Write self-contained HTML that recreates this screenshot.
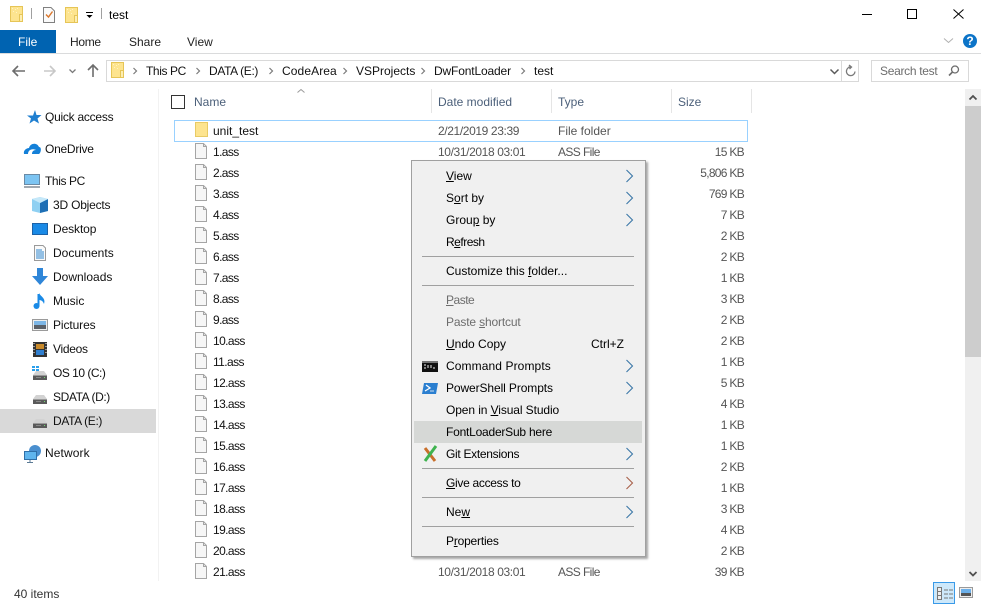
<!DOCTYPE html>
<html><head><meta charset="utf-8">
<style>
html,body{margin:0;padding:0;background:#fff}
#w{position:relative;width:981px;height:605px;overflow:hidden;background:#fff;font:12px/16px "Liberation Sans",sans-serif;color:#000}
#w span,#w div{position:absolute;white-space:nowrap}
svg{position:absolute;left:0;top:0}
.n{color:#111}
.h{color:#4c607a}
.g{color:#555}
.d{color:#555;left:438px;letter-spacing:-.38px}
.t{color:#555;left:558px}
.sz{color:#555;right:237px;letter-spacing:-.7px}
.f{left:213px;color:#111;letter-spacing:-.6px}
#m{left:411px;top:160px;width:233px;height:395px;background:#f0f0f0;border:1px solid #a0a0a0;box-shadow:2px 2px 2px rgba(0,0,0,.35)}
.mi{color:#000}
.dis{color:#6d6d6d}
.sep{left:422px;width:212px;height:1px;background:#a0a0a0}
</style></head><body><div id="w">

<svg width="981" height="605" viewBox="0 0 981 605" fill="none">
<defs>
<g id="fold"><path d="M.5.5H12.500V15.500H.5Z" fill="#fde48f" stroke="#e6c557"/><path d="M9.500 8.500H12.500V15.500H9.500Z" fill="#fdeeb2" stroke="#e6c557"/><path d="M2 2h1v1H2zM5 3h1v1H5zM3 5h1v1H3zM7 2h1v1H7zM6 6h1v1H6z" fill="#fff3c4"/></g>
<g id="doc"><path d="M.5.5H8.500L11.500 3.500V15.500H.5Z" fill="#f6f6f6" stroke="#a5a5a5"/><path d="M8.500.5V3.500H11.500" stroke="#a5a5a5"/></g>
<g id="drv"><path d="M0 5L3 1H11L14 5Z" fill="#d2d2d2"/><rect x="0" y="5" width="14" height="5" fill="#5a5a5a"/><rect x="0" y="5" width="14" height="1" fill="#9a9a9a"/><rect x="11" y="7" width="1" height="1" fill="#6fdc6f"/><rect x="3" y="7" width="5" height="1" fill="#888"/></g>
</defs>

<!-- title bar -->
<use href="#fold" x="10" y="6"/>
<path d="M31.500 8V19" stroke="#a0a0a0"/>
<path d="M43.500 7.500H51L54.500 11V22.500H43.500Z" fill="#fafafa" stroke="#808080"/>
<path d="M46 14.500L48.500 17L52.500 11.500" stroke="#d9762b" stroke-width="1.400"/>
<use href="#fold" x="65" y="7"/>
<path d="M86 12.500H93" stroke="#000"/><path d="M86.500 15H92.500L89.500 18Z" fill="#000"/>
<path d="M101.500 8V19" stroke="#a0a0a0"/>
<!-- window controls -->
<path d="M862 14.500H872" stroke="#000"/>
<rect x="907.500" y="9.500" width="9" height="9" stroke="#000"/>
<path d="M953.500 9.500L963.500 18.500M963.500 9.500L953.500 18.500" stroke="#000"/>
<!-- ribbon -->
<rect x="0" y="30" width="56" height="23" fill="#0063b1"/>
<rect x="56" y="53" width="925" height="1" fill="#dadbdc"/>
<rect x="0" y="53" width="56" height="1" fill="#dadbdc"/>
<path d="M944 38.500L948.500 42.500L953 38.500" stroke="#b0b0b0"/>
<circle cx="970" cy="41" r="7" fill="#0c74c8"/>
<!-- nav arrows -->
<path d="M13 71H25M18 66L13 71L18 76" stroke="#6d6d6d" stroke-width="1.600"/>
<path d="M44 71H55M50 66L55 71L50 76" stroke="#c8c8c8" stroke-width="1.600"/>
<path d="M69.500 69.500L72.500 72.500L75.500 69.500" stroke="#7a7a7a" stroke-width="1.300"/>
<path d="M93 77V65M88 70L93 65L98 70" stroke="#6d6d6d" stroke-width="1.600"/>
<!-- address -->
<rect x="106.500" y="60.500" width="752" height="21" stroke="#d9d9d9"/>
<path d="M841.500 61V81" stroke="#d9d9d9"/>
<use href="#fold" x="111" y="62"/>
<path d="M133.500 68L136.500 71L133.500 74M196.500 68L199.500 71L196.500 74M269.500 68L272.500 71L269.500 74M343.500 68L346.500 71L343.500 74M421.500 68L424.500 71L421.500 74M521.500 68L524.500 71L521.500 74" stroke="#7a7a7a" stroke-width="1.200"/>
<path d="M830.500 69.500L834.500 73.500L838.500 69.500" stroke="#5a5a5a" stroke-width="1.500"/>
<path d="M855 71.500A4.300 4.300 0 1 1 851 67H848.500M849 65L851.500 67L849.500 69" stroke="#7a7a7a" stroke-width="1.300"/>
<rect x="871.500" y="60.500" width="97" height="21" stroke="#d9d9d9"/>
<circle cx="955" cy="69.500" r="3.500" stroke="#6d6d6d" stroke-width="1.300"/><path d="M952.500 72L949 75.500" stroke="#6d6d6d" stroke-width="1.600"/>
<!-- sidebar -->
<rect x="0" y="409" width="156" height="24" fill="#d9d9d9"/>
<path d="M158.500 89V581" stroke="#f2f2f2"/>
<path d="M35 110L36.500 115H41.500L37.500 118.500L39 123.500L34 120.500L29.500 123.500L31 118.500L27 115.500H33Z" fill="#1f7fd0"/>
<path d="M24 154C23 150 27 148 29 148C30 143 37 142 39 147C42 147 41 153 39 154Z" fill="#1480d8"/><path d="M28 154C28 150 32 148 36 150C33 150 32 152 32 154Z" fill="#fff"/>
<rect x="24.500" y="174.500" width="15" height="10" fill="#7cc4f2" stroke="#6a8aa5"/><rect x="24" y="186" width="16" height="2" fill="#a0a8b0"/>
<path d="M32 199L40 197L48 199V211L40 213L32 211Z" fill="#8fd0f2"/><path d="M40 203L48 199V211L40 213Z" fill="#1e6fb5"/><path d="M32 199L40 197L48 199L40 203Z" fill="#c5e8f9"/>
<rect x="32.500" y="223.500" width="15" height="11" fill="#1a8ae6" stroke="#1c62a8"/>
<path d="M34.500 245.500H43L45.500 248V260.500H34.500Z" fill="#fafafa" stroke="#9a9a9a"/><path d="M36 250H42M36 252H44M36 254H44M36 256H44M36 258H44" stroke="#2f86cf"/>
<path d="M37 268H43V276H48L40 285L32 276H37Z" fill="#2f86d8"/>
<path d="M38.500 294V306" stroke="#1a8ae6" stroke-width="2"/><ellipse cx="36.500" cy="306" rx="3" ry="3" fill="#1a8ae6"/><path d="M39 293C41 297 46 298 44 304C43 301 41 300 39 300Z" fill="#1a8ae6"/>
<rect x="32.500" y="319.500" width="15" height="11" fill="#eee" stroke="#9a9a9a"/><rect x="34" y="321" width="12" height="4" fill="#7cb6e6"/><path d="M34 325H46V329H34Z" fill="#5a6068"/>
<rect x="33" y="342" width="14" height="15" fill="#333"/><rect x="36" y="344" width="8" height="5" fill="#c98a2b"/><rect x="36" y="350" width="8" height="5" fill="#2f7fd0"/><path d="M34 343v1M34 346v1M34 349v1M34 352v1M46 343v1M46 346v1M46 349v1M46 352v1" stroke="#fff"/>
<path d="M32 366h3v2h-3zM36 366h3v2h-3zM32 369h3v2h-3zM36 369h3v2h-3z" fill="#2ba0ec"/>
<use href="#drv" x="33" y="370"/>
<use href="#drv" x="33" y="394"/>
<use href="#drv" x="33" y="418"/>
<circle cx="35" cy="451" r="6" fill="#4a8fcf"/><rect x="24.500" y="451.500" width="12" height="8" fill="#5fb5ee" stroke="#2f6fa8"/><path d="M30 460V462M27 462.500H33" stroke="#5a7a95"/>
<!-- headers -->
<rect x="171.500" y="95.500" width="13" height="13" stroke="#333"/>
<path d="M297.500 92.500L301 89.500L304.500 92.500" stroke="#9a9a9a"/>
<path d="M431.500 89V113M551.500 89V113M671.500 89V113M751.500 89V113" stroke="#e5e5e5"/>
<!-- row -->
<rect x="174.500" y="120.500" width="573" height="21" fill="#fff" stroke="#99d1ff"/>
<path d="M195.500 122.500H207.500V136.500H195.500Z" fill="#fde48f" stroke="#e8cb65"/>
<!-- files -->
<use href="#doc" x="195" y="143"/><use href="#doc" x="195" y="164"/><use href="#doc" x="195" y="185"/><use href="#doc" x="195" y="206"/><use href="#doc" x="195" y="227"/><use href="#doc" x="195" y="248"/><use href="#doc" x="195" y="269"/><use href="#doc" x="195" y="290"/><use href="#doc" x="195" y="311"/><use href="#doc" x="195" y="332"/><use href="#doc" x="195" y="353"/><use href="#doc" x="195" y="374"/><use href="#doc" x="195" y="395"/><use href="#doc" x="195" y="416"/><use href="#doc" x="195" y="437"/><use href="#doc" x="195" y="458"/><use href="#doc" x="195" y="479"/><use href="#doc" x="195" y="500"/><use href="#doc" x="195" y="521"/><use href="#doc" x="195" y="542"/><use href="#doc" x="195" y="563"/>
<!-- scrollbar -->
<rect x="965" y="89" width="16" height="492" fill="#f0f0f0"/>
<rect x="965" y="106" width="16" height="251" fill="#cdcdcd"/>
<path d="M969.500 99.500L973 96L976.500 99.500" stroke="#505050" stroke-width="1.800"/>
<path d="M969.500 572L973 575.500L976.500 572" stroke="#505050" stroke-width="1.800"/>
<!-- view buttons -->
<rect x="933.500" y="582.500" width="21" height="21" fill="#cde8fa" stroke="#3a9ae8"/>
<path d="M937.500 587.500H941.500V599.500H937.500ZM937.500 591.500H941.500M937.500 595.500H941.500" stroke="#777" fill="#eee"/>
<path d="M944 590H948M949 590H953M944 594H948M949 594H953M944 598H948M949 598H953" stroke="#777"/>
<rect x="959.500" y="587.500" width="13" height="10" fill="#eee" stroke="#9a9a9a"/><rect x="961" y="589" width="10" height="4" fill="#6cb0ea"/><rect x="961" y="593" width="10" height="3" fill="#555"/>
</svg>

<!-- title text -->
<span style="left:109px;top:7px">test</span>
<span style="left:18px;top:34px;color:#fff">File</span>
<span style="left:70px;top:34px;color:#222;letter-spacing:-.3px">Home</span>
<span style="left:129px;top:34px;color:#222">Share</span>
<span style="left:187px;top:34px;color:#222">View</span>
<span style="left:970px;top:33px;color:#fff;font-weight:bold;transform:translateX(-50%)">?</span>

<!-- breadcrumb -->
<span class="n" style="left:146px;top:63px;letter-spacing:-.4px">This PC</span>
<span class="n" style="left:209px;top:63px;letter-spacing:-.35px">DATA (E:)</span>
<span class="n" style="left:282px;top:63px;letter-spacing:.1px">CodeArea</span>
<span class="n" style="left:356px;top:63px">VSProjects</span>
<span class="n" style="left:434px;top:63px;letter-spacing:-.15px">DwFontLoader</span>
<span class="n" style="left:534px;top:63px">test</span>
<span style="left:880px;top:63px;color:#6d6d6d;letter-spacing:-.3px">Search test</span>

<!-- sidebar text -->
<span class="n" style="left:45px;top:109px;letter-spacing:-.25px">Quick access</span>
<span class="n" style="left:45px;top:141px;letter-spacing:-.25px">OneDrive</span>
<span class="n" style="left:45px;top:173px;letter-spacing:-.4px">This PC</span>
<span class="n" style="left:53px;top:197px;letter-spacing:-.2px">3D Objects</span>
<span class="n" style="left:53px;top:221px;letter-spacing:-.1px">Desktop</span>
<span class="n" style="left:53px;top:245px">Documents</span>
<span class="n" style="left:53px;top:269px">Downloads</span>
<span class="n" style="left:53px;top:293px">Music</span>
<span class="n" style="left:53px;top:317px;letter-spacing:-.1px">Pictures</span>
<span class="n" style="left:53px;top:341px;letter-spacing:-.3px">Videos</span>
<span class="n" style="left:53px;top:365px;letter-spacing:-.5px">OS 10 (C:)</span>
<span class="n" style="left:53px;top:389px;letter-spacing:-.4px">SDATA (D:)</span>
<span class="n" style="left:53px;top:413px;letter-spacing:-.35px">DATA (E:)</span>
<span class="n" style="left:45px;top:445px;letter-spacing:.1px">Network</span>

<!-- header text -->
<span class="h" style="left:194px;top:94px">Name</span>
<span class="h" style="left:438px;top:94px">Date modified</span>
<span class="h" style="left:558px;top:94px">Type</span>
<span class="h" style="left:678px;top:94px">Size</span>

<!-- rows -->
<span class="f" style="top:123px;letter-spacing:0">unit_test</span><span class="d" style="top:123px">2/21/2019 23:39</span><span class="t" style="top:123px">File folder</span>
<span class="f" style="top:144px">1.ass</span><span class="d" style="top:144px">10/31/2018 03:01</span><span class="t" style="top:144px;letter-spacing:-.6px">ASS File</span><span class="sz" style="top:144px">15 KB</span>
<span class="f" style="top:165px">2.ass</span><span class="sz" style="top:165px">5,806 KB</span>
<span class="f" style="top:186px">3.ass</span><span class="sz" style="top:186px">769 KB</span>
<span class="f" style="top:207px">4.ass</span><span class="sz" style="top:207px">7 KB</span>
<span class="f" style="top:228px">5.ass</span><span class="sz" style="top:228px">2 KB</span>
<span class="f" style="top:249px">6.ass</span><span class="sz" style="top:249px">2 KB</span>
<span class="f" style="top:270px">7.ass</span><span class="sz" style="top:270px">1 KB</span>
<span class="f" style="top:291px">8.ass</span><span class="sz" style="top:291px">3 KB</span>
<span class="f" style="top:312px">9.ass</span><span class="sz" style="top:312px">2 KB</span>
<span class="f" style="top:333px">10.ass</span><span class="sz" style="top:333px">2 KB</span>
<span class="f" style="top:354px">11.ass</span><span class="sz" style="top:354px">1 KB</span>
<span class="f" style="top:375px">12.ass</span><span class="sz" style="top:375px">5 KB</span>
<span class="f" style="top:396px">13.ass</span><span class="sz" style="top:396px">4 KB</span>
<span class="f" style="top:417px">14.ass</span><span class="sz" style="top:417px">1 KB</span>
<span class="f" style="top:438px">15.ass</span><span class="sz" style="top:438px">1 KB</span>
<span class="f" style="top:459px">16.ass</span><span class="sz" style="top:459px">2 KB</span>
<span class="f" style="top:480px">17.ass</span><span class="sz" style="top:480px">1 KB</span>
<span class="f" style="top:501px">18.ass</span><span class="sz" style="top:501px">3 KB</span>
<span class="f" style="top:522px">19.ass</span><span class="sz" style="top:522px">4 KB</span>
<span class="f" style="top:543px">20.ass</span><span class="sz" style="top:543px">2 KB</span>
<span class="f" style="top:564px">21.ass</span><span class="d" style="top:564px">10/31/2018 03:01</span><span class="t" style="top:564px;letter-spacing:-.6px">ASS File</span><span class="sz" style="top:564px">39 KB</span>

<span style="left:14px;top:586px;color:#333">40 items</span>

<!-- context menu -->
<div id="m"></div>
<div style="left:414px;top:421px;width:228px;height:22px;background:#d6d8d6"></div>
<div class="sep" style="top:256px"></div>
<div class="sep" style="top:285px"></div>
<div class="sep" style="top:468px"></div>
<div class="sep" style="top:497px"></div>
<div class="sep" style="top:526px"></div>

<span class="mi" style="left:446px;top:168px"><u>V</u>iew</span>
<span class="mi" style="left:446px;top:190px">S<u>o</u>rt by</span>
<span class="mi" style="left:446px;top:212px">Grou<u>p</u> by</span>
<span class="mi" style="left:446px;top:234px;letter-spacing:-.5px">R<u>e</u>fresh</span>
<span class="mi" style="left:446px;top:263px">Customize this <u>f</u>older...</span>
<span class="dis" style="left:446px;top:292px;letter-spacing:-.5px"><u>P</u>aste</span>
<span class="dis" style="left:446px;top:314px;letter-spacing:-.15px">Paste <u>s</u>hortcut</span>
<span class="mi" style="left:446px;top:336px"><u>U</u>ndo Copy</span>
<span class="mi" style="left:591px;top:336px">Ctrl+Z</span>
<span class="mi" style="left:446px;top:358px;letter-spacing:.1px">Command Prompts</span>
<span class="mi" style="left:446px;top:380px;letter-spacing:-.1px">PowerShell Prompts</span>
<span class="mi" style="left:446px;top:402px;letter-spacing:-.1px">Open in <u>V</u>isual Studio</span>
<span class="mi" style="left:446px;top:424px;letter-spacing:-.22px">FontLoaderSub here</span>
<span class="mi" style="left:446px;top:446px;letter-spacing:-.3px">Git Extensions</span>
<span class="mi" style="left:446px;top:475px;letter-spacing:-.3px"><u>G</u>ive access to</span>
<span class="mi" style="left:446px;top:504px">Ne<u>w</u></span>
<span class="mi" style="left:446px;top:533px;letter-spacing:-.2px">P<u>r</u>operties</span>

<svg width="981" height="605" viewBox="0 0 981 605" fill="none" style="pointer-events:none">
<path d="M626.500 170L632.500 176L626.500 182M626.500 192L632.500 198L626.500 204M626.500 214L632.500 220L626.500 226M626.500 360L632.500 366L626.500 372M626.500 382L632.500 388L626.500 394M626.500 448L632.500 454L626.500 460M626.500 506L632.500 512L626.500 518" stroke="#3c78a8" stroke-width="1.100"/>
<path d="M626.500 477L632.500 483L626.500 489" stroke="#a8604a" stroke-width="1.100"/>
<rect x="422" y="361" width="16" height="11" fill="#111"/><rect x="422" y="361" width="16" height="2" fill="#777"/><path d="M424 365h2M424 368h2M428 365v3M431 365v3M433 368h2" stroke="#eee"/>
<path d="M424 383H438L436 394H422Z" fill="#2b7fd0"/><path d="M426 385L430 388L425 391" stroke="#fff" stroke-width="1.300"/><path d="M430 391H434" stroke="#cde"/>
<path d="M425 448L435 461" stroke="#c96f2b" stroke-width="3"/><path d="M436 446L425 461" stroke="#3fb34f" stroke-width="3"/>
</svg>
</div></body></html>
